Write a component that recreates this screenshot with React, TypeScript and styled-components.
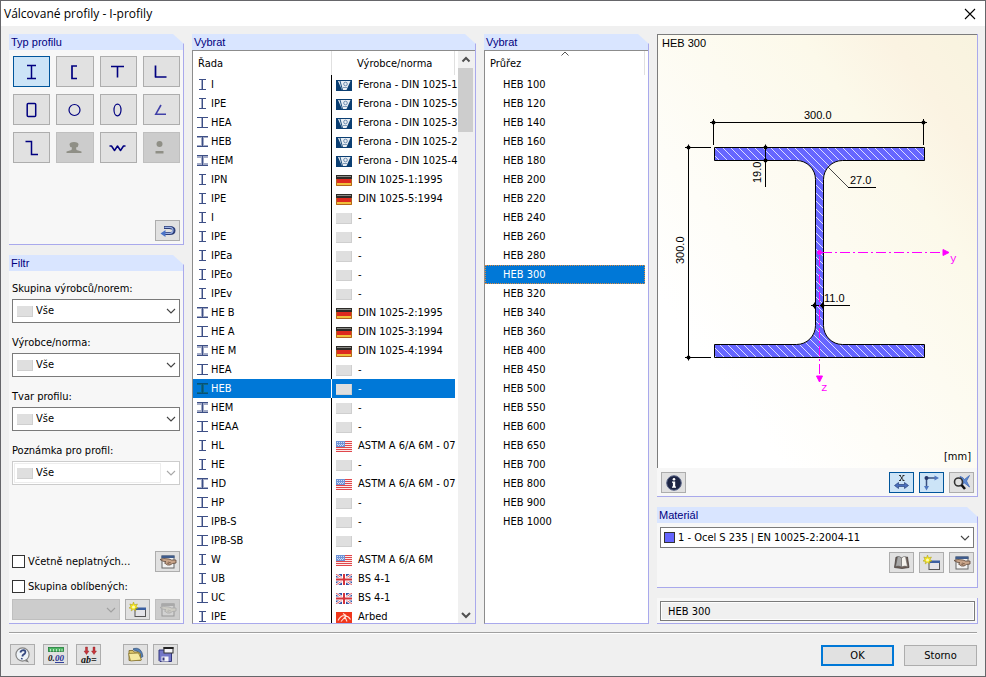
import React, { useState } from 'react';
import styled, { createGlobalStyle, css } from 'styled-components';

const UI_FONT = '"DejaVu Sans Condensed", Tahoma, sans-serif';
const ARIAL = '"Liberation Sans", Arial, sans-serif';
const NAVY = '#000080';
const LILAC = '#a9a9ec';

const GlobalStyle = createGlobalStyle`
  *, *::before, *::after { box-sizing: border-box; }
  body { margin: 0; background: #f0f0f0; }
  button, input, select { font: inherit; color: inherit; }
  svg { display: block; flex: none; }
`;

/* ---------- window ---------- */

const Dialog = styled.div`
  display: flex;
  flex-direction: column;
  height: 100vh;
  min-height: 640px;
  border: 1px solid #66666a;
  background: #f0f0f0;
  color: #000;
  font: 11px/14px ${UI_FONT};
`;

const TitleBar = styled.header`
  display: flex;
  align-items: center;
  justify-content: space-between;
  height: 25px;
  padding: 0 9px 0 3px;
  background: #fff;
`;

const Title = styled.h1`
  margin: 0;
  font: 12px/24px "Open Sans", "Segoe UI", sans-serif;
`;

const CloseButton = styled.button`
  display: grid;
  place-items: center;
  padding: 0;
  border: 0;
  background: none;
`;

const Columns = styled.main`
  display: grid;
  flex: 1;
  grid-template-columns: 175fr 284fr 165fr 321fr;
  column-gap: 8px;
  min-height: 0;
  padding: 8px 7px 0 8px;
`;

const Column = styled.div`
  display: flex;
  flex-direction: column;
  gap: 10px;
  min-width: 0;
  min-height: 0;
`;

/* ---------- panels ---------- */

const Panel = styled.section<{ $grow?: boolean }>`
  display: flex;
  flex-direction: column;
  flex: ${p => (p.$grow ? '1' : 'none')};
  min-width: 0;
  min-height: 0;
`;

const PanelTitle = styled.h2`
  flex: none;
  margin: 0;
  height: 16px;
  padding-left: 2px;
  border-right: 1px solid ${LILAC};
  background: #d9e5ff;
  color: ${NAVY};
  font: 11px/17px ${ARIAL};
  clip-path: polygon(0 0, calc(100% - 11px) 0, 100% 10px, 100% 100%, 0 100%);
`;

const PanelBody = styled.div<{ $pad?: string }>`
  display: flex;
  flex-direction: column;
  flex: 1;
  min-height: 0;
  padding: ${p => p.$pad ?? '0'};
  border: solid ${LILAC};
  border-width: 0 1px 1px 0;
  background: #f7f7f7;
`;

const ListFrame = styled(PanelBody)`
  flex-direction: row;
  border-left: 1px solid #8c8c8c;
  background: linear-gradient(#8c8c8c, #8c8c8c) top / 100% 1px no-repeat, #fff;
  padding-top: 1px;
`;

const TypeGrid = styled.div`
  display: grid;
  grid-template-columns: repeat(4, 1fr);
  gap: 7px 6px;
  margin-bottom: 57px;
`;

const toolLook = css<{ $active?: boolean }>`
  display: grid;
  place-items: center;
  padding: 0;
  border: 1px solid ${p => (p.$active ? '#00559b' : '#adadad')};
  background: ${p => (p.$active ? '#cce4f7' : '#e1e1e1')};
  &:disabled {
    border-color: #bfbfbf;
    background: #cccccc;
  }
`;

const TypeButton = styled.button`
  ${toolLook}
  height: 31px;
`;

const ToolButton = styled.button`
  ${toolLook}
  flex: none;
  width: 25px;
  height: 21px;
`;

const ToolRow = styled.div<{ $align?: string }>`
  display: flex;
  align-items: center;
  justify-content: ${p => p.$align ?? 'flex-end'};
  gap: 5px;
`;

const PreviewTools = styled(ToolRow)`
  padding: 4px 3px 3px 4px;
`;

const MaterialTools = styled(ToolRow)`
  padding-top: 4px;
`;

const Push = styled.div`
  margin-right: auto;
`;

/* ---------- form parts ---------- */

const Field = styled.div`
  display: flex;
  flex-direction: column;
  gap: 3px;
  margin-bottom: 13px;
`;

const Combo = styled.div<{ $muted?: boolean; $tight?: boolean; $grey?: boolean }>`
  display: flex;
  align-items: center;
  flex: ${p => (p.$grey ? '1' : 'none')};
  min-width: 0;
  height: ${p => (p.$grey || p.$tight ? 21 : 24)}px;
  padding: 0 3px 0 ${p => (p.$tight ? 3 : 4)}px;
  border: 1px solid ${p => (p.$grey ? '#bfbfbf' : p.$muted ? '#cccccc' : '#7a7a7a')};
  background: ${p => (p.$grey ? '#cccccc' : '#fff')};
  color: ${p => (p.$grey ? '#a0a0a0' : p.$muted ? '#a8a8a8' : '#444')};
`;

const ComboSelect = styled.select`
  flex: 1;
  min-width: 0;
  height: 100%;
  padding: 0 0 0 3px;
  border: 0;
  outline: 0;
  appearance: none;
  background: none;
  color: #000;
  opacity: 1;
`;

const Blank = styled.span`
  flex: none;
  width: 16px;
  height: 11px;
  border: solid #cfcfcf;
  border-width: 0 1px 1px 0;
  background: #dfdfdf;
`;

const MutedInner = styled.div`
  display: flex;
  align-items: center;
  flex: 1;
  align-self: stretch;
  min-width: 0;
  margin: 1px 5px 1px -3px;
  padding-left: 2px;
  border: 1px solid #ededed;
`;

const MaterialSwatch = styled.span`
  flex: none;
  width: 11px;
  height: 11px;
  border: 1px solid #333;
  background: #6666ff;
`;

const FilterEnd = styled.div`
  margin-top: auto;
`;

const CheckRow = styled.div`
  display: flex;
  align-items: center;
  justify-content: space-between;
  height: 25px;
`;

const CheckLabel = styled.label`
  display: flex;
  align-items: center;
  gap: 3px;
  white-space: nowrap;
`;

const CheckBox = styled.input`
  appearance: none;
  width: 13px;
  height: 13px;
  margin: 0;
  border: 1px solid #333;
  background: #fff;
  &:checked { background: #0078d7; }
`;

/* ---------- tables ---------- */

const ListClip = styled.div`
  flex: 1;
  min-width: 0;
  overflow: hidden;
  padding-right: 3px;
`;

const Table = styled.table`
  width: 100%;
  border-collapse: collapse;
  table-layout: fixed;
`;

const FirstCol = styled.col`
  width: 53%;
`;

const Th = styled.th<{ $indent: number }>`
  position: relative;
  height: 24px;
  padding: 1px 0 0 ${p => p.$indent}px;
  border-right: 1px solid #e0e0e0;
  font-weight: 400;
  text-align: left;
`;

const SortMark = styled.span`
  position: absolute;
  top: 0;
  left: calc(50% - 4px);
`;

const Tr = styled.tr<{ $selected?: boolean; $focus?: boolean }>`
  height: 19px;
  ${p => p.$selected && css`background: #0078d7; color: #fff;`}
  ${p => p.$focus && css`outline: 1px dotted #e08a3c; outline-offset: -1px;`}
`;

const Td = styled.td<{ $indent?: number; $rule?: boolean; $selected?: boolean }>`
  height: 19px;
  padding: 1px 0 0 ${p => p.$indent ?? 4}px;
  white-space: nowrap;
  ${p => p.$rule && css`border-right: 1px solid ${p.$selected ? '#fff' : '#000'};`}
`;

const CellContent = styled.div<{ $gap: number }>`
  display: flex;
  align-items: center;
  gap: ${p => p.$gap}px;
`;

const ScrollBar = styled.div`
  display: flex;
  flex: none;
  flex-direction: column;
  width: 17px;
  padding-right: 2px;
  background: #f0f0f0;
  color: #505050;
  z-index: 1;
`;

const ScrollArrow = styled.button`
  display: grid;
  place-items: center;
  height: 17px;
  padding: 0;
  border: 0;
  background: none;
`;

const ScrollTrack = styled.div`
  flex: 1;
`;

const ScrollThumb = styled.div`
  height: 64px;
  background: #cdcdcd;
`;

/* ---------- preview ---------- */

const Canvas = styled.figure`
  display: flex;
  flex: 1;
  flex-direction: column;
  min-height: 0;
  margin: 0;
  border: solid #7c7c7c;
  border-width: 1px 0 0 1px;
  background: linear-gradient(to top right, #ffffff 20%, #fcf9ea 72%, #fbf3e2 86%, #f8f3df);
  svg { flex: 1; width: 100%; min-height: 0; }
`;

const CanvasTitle = styled.figcaption`
  padding-left: 4px;
  font: 11px/17px ${ARIAL};
`;

const Unit = styled.div`
  padding: 0 6px 2px 0;
  font: 11px/19px ${UI_FONT};
  text-align: right;
`;

const ResultField = styled.input`
  width: 100%;
  height: 20px;
  padding: 0 7px;
  border: 1px solid #7a7a7a;
  outline: 1px solid #fdfdfd;
  outline-offset: -2px;
  background: #f0f0f0;
`;

/* ---------- footer ---------- */

const Footer = styled.footer`
  display: flex;
  align-items: center;
  flex: none;
  height: 44px;
  margin: 8px 8px 0 8px;
  border-top: 1px solid #a0a0a0;
  box-shadow: inset 0 1px #fff;
`;

const FooterGroup = styled.div<{ $gap: number }>`
  display: flex;
  gap: ${p => p.$gap}px;
  margin: 0 21px 0 1px;
`;

const Actions = styled.div`
  display: flex;
  gap: 10px;
  margin: 2px 0 0 auto;
`;

const ActionButton = styled.button<{ $primary?: boolean }>`
  width: 73px;
  height: 21px;
  padding: 0;
  border: ${p => (p.$primary ? '2px solid #0078d7' : '1px solid #adadad')};
  background: #e1e1e1;
`;

/* ---------- icons ---------- */

const Chevron = ({ up = false, bold = false }: { up?: boolean; bold?: boolean }) => (
  <svg width="10" height="10" viewBox="0 0 10 10" fill="none" stroke="currentColor" strokeWidth={bold ? 2 : 1.1}>
    <path d={up ? 'M1.5 6.5 5 3l3.5 3.5' : 'M1 3l4 4 4-4'} />
  </svg>
);

const typeShapes: Record<string, { node: React.ReactNode; label: string; off?: boolean }> = {
  i: { label: 'I-profily', node: <path d="M5 3.500h9M5 16.500h9M9.500 3v14" strokeWidth="1.500" /> },
  u: { label: 'U-profily', node: <path d="M12 4H7v12.500H12" strokeWidth="1.700" /> },
  t: { label: 'T-profily', node: <path d="M3 4.500h13M9.500 4v11.500" strokeWidth="1.600" /> },
  l: { label: 'L-profily', node: <path d="M4.500 3.500v12M4 15h11.500" strokeWidth="1.700" /> },
  box: { label: 'Obdélníkové duté profily', node: <rect x="5.200" y="3.500" width="8.500" height="13" rx="1" strokeWidth="1.500" /> },
  tube: { label: 'Trubky', node: <circle cx="9.500" cy="10" r="5.500" strokeWidth="1.200" /> },
  oval: { label: 'Oválné duté profily', node: <ellipse cx="9.500" cy="10" rx="3.500" ry="5.800" strokeWidth="1.200" /> },
  angle: { label: 'Úhlové profily', node: <path d="M10 5 4.800 14.200H15" strokeWidth="1.600" stroke="#4040a8" /> },
  z: { label: 'Z-profily', node: <path d="M3.500 3.500H9.500v13h6.500" strokeWidth="1.500" /> },
  rail: {
    label: 'Kolejnice', off: true,
    node: <path d="M4.500 6.500Q4.500 4 9 4t4.500 2.500Q13.500 9 11 9.500L11.500 12l5 1.500V15H1.500v-1.500l5-1.500L7 9.500Q4.500 9 4.500 6.500Z" fill="#8f8f86" stroke="none" />,
  },
  wave: { label: 'Vlnité profily', node: <path d="M1.500 8H3.500L6.500 12.500 9.500 8l3 4.500L15.500 8H17.500" strokeWidth="1.500" strokeLinejoin="round" /> },
  other: {
    label: 'Ostatní profily', off: true,
    node: <g fill="#8f8f86" stroke="none"><circle cx="8.500" cy="6" r="3" /><rect x="4.500" y="13" width="8" height="2.500" /></g>,
  },
};

const TypeIcon = ({ id }: { id: string }) => (
  <svg width="20" height="20" viewBox="0 0 20 20" fill="none" stroke={NAVY}>{typeShapes[id].node}</svg>
);

const ReturnIcon = () => (
  <svg width="16" height="14" viewBox="0 0 16 14" fill="none">
    <path d="M4 3.500h5.500q4.500 0 4.500 3t-4.500 3H5" stroke="#2c3d78" strokeWidth="3" />
    <path d="M4.500 3.300h5q3.500 0 3.500 3T9.500 9.300H5" stroke="#9db4e6" strokeWidth="1.200" />
    <path d="M.5 9.500 5.500 6v7Z" fill="#4a73c8" />
  </svg>
);

const EditIcon = ({ off = false }: { off?: boolean }) => (
  <svg width="18" height="16" viewBox="0 0 18 16" opacity={off ? 0.5 : 1}>
    <rect x="3" y="2" width="12" height="12" fill={off ? '#d8d8d8' : '#f2f2f2'} stroke="#666" />
    <rect x="2.500" y="1.500" width="13" height="2.500" fill={off ? '#888' : '#3f5c8c'} />
    <path d="M1 5.500 5 4.500l5 .5 2.500 1H17V9l-3.500.5-2.500 1.500H8.500l-3-2 1.500-1.300-3-.5Z" fill={off ? '#cfccbe' : '#c9a58a'} stroke={off ? '#888' : '#5d473a'} strokeWidth=".8" />
    <path d="M9 8l3 1M8 9l2.500 1" stroke={off ? '#888' : '#5b4132'} strokeWidth=".6" />
  </svg>
);

const NewIcon = () => (
  <svg width="18" height="16" viewBox="0 0 18 16">
    <rect x="6" y="6.500" width="10.500" height="8" fill="#e4e4e8" stroke="#555" />
    <rect x="5.500" y="5.500" width="11.500" height="2.500" fill="#3b5fa0" />
    <path d="M4.500 0l1 2.800L8.500 2 7 4.500 9 6 6.500 6.500 6.800 9 4.500 7.200 2.200 9 2.500 6.500 0 6l2-1.500L.8 2l2.700.8Z" fill="#f4e61e" stroke="#a89a1c" strokeWidth=".5" />
    <circle cx="4.500" cy="5" r="1.500" fill="#fffbb0" />
  </svg>
);

const HelpIcon = () => (
  <svg width="18" height="16" viewBox="0 0 18 16">
    <path d="M13 12.500l2 3-4.500-1.500Z" fill="#777" />
    <circle cx="8.500" cy="7.500" r="6.600" fill="#eef3f8" stroke="#858585" strokeWidth="1.200" />
    <path d="M6.300 5.500Q7 3.200 9.500 3.200q2.200.2 1.800 2.300-.3 1.300-1.800 2.100-1 .6-1.200 1.900M7.900 11l-.2 1.300" fill="none" stroke="#34477f" strokeWidth="1.800" />
  </svg>
);

const iconText = { fontFamily: '"Liberation Serif", serif', fontStyle: 'italic', fontWeight: 700 } as const;

const UnitsIcon = () => (
  <svg width="20" height="18" viewBox="0 0 20 18">
    <rect x="2.500" y="1.500" width="15" height="4" fill="#4fb565" stroke="#1d7d36" strokeWidth=".8" />
    <path d="M4.500 3v2.500M7.500 3v2.500M10.500 3v2.500M13.500 3v2.500M16 3v2.500" stroke="#d5f0d8" strokeWidth=".8" />
    <text x="2" y="15" fontSize="9" fill="#111" {...iconText}>0.</text>
    <text x="9" y="15" fontSize="9" fill="#1d2f94" textDecoration="underline" {...iconText}>00</text>
  </svg>
);

const RenameIcon = () => (
  <svg width="20" height="18" viewBox="0 0 20 18">
    <path d="M6.500 1H8.500v4H10L7.500 8.500 5 5H6.500ZM14 1h2v4h1.500L15 8.500 12.500 5H14Z" fill="#c8343a" stroke="#8b1e24" strokeWidth=".4" />
    <text x="2" y="16.500" fontSize="10" fill="#111" {...iconText}>ab=</text>
  </svg>
);

const OpenIcon = () => (
  <svg width="18" height="16" viewBox="0 0 18 16">
    <path d="M6.500 1.500q8-2 9.500 8l-2.500 1.500Q13 4 6.500 3Z" fill="#5580b5" stroke="#27456f" strokeWidth=".6" />
    <path d="M2 13.500V3.500h4l1 1.500h4.500l2 2v6.500Z" fill="#dcc56a" stroke="#77652a" strokeWidth=".8" />
    <path d="M1.500 6.500 11.500 6l3 7-11 1Z" fill="#f5e9a0" stroke="#8a7734" strokeWidth=".8" />
  </svg>
);

const SaveIcon = () => (
  <svg width="18" height="17" viewBox="0 0 18 17">
    <path d="M2 4h12.500v11.500H3l-1-1Z" fill="#7377c8" stroke="#33377d" />
    <rect x="4.500" y="10.500" width="7" height="5" fill="#f4f4f8" />
    <rect x="5.500" y="11.500" width="2" height="3" fill="#33377d" />
    <rect x="7" y="1.500" width="9" height="5.500" fill="#f4f4f8" stroke="#333" />
    <path d="M6.500 2h10" stroke="#222" strokeWidth="2" />
  </svg>
);

const InfoIcon = () => (
  <svg width="16" height="16" viewBox="0 0 16 16">
    <circle cx="8" cy="8" r="7.300" fill="#1c2443" stroke="#5b6688" />
    <path d="M6 6.500h3.200v5H10v1.200H6v-1.200h.9V7.700H6Z" fill="#fff" />
    <circle cx="8" cy="4.200" r="1.300" fill="#fff" />
  </svg>
);

const DimensionIcon = () => (
  <svg width="18" height="16" viewBox="0 0 18 16">
    <path d="M7 .5l3.500 5M10.500.500 7 5.500M6 .5h2M9.500.500h2M6 5.500h2M9.500 5.500h2" stroke="#222" strokeWidth=".9" />
    <path d="M1.500 10.500 5.500 7.500v2h6v-2L15.500 10.500 11.500 13.500v-2h-6v2Z" fill="#4a70bd" stroke="#28427d" strokeWidth=".7" />
  </svg>
);

const AxesIcon = () => (
  <svg width="18" height="18" viewBox="0 0 18 18">
    <path d="M3.500 4h10M3.500 4V13" stroke="#3a5080" strokeWidth="1.500" />
    <path d="M11.500 1.500 16 4l-4.500 2.500ZM1 12h5l-2.500 4.500Z" fill="#4f77bf" />
    <circle cx="3.500" cy="4" r="2" fill="#27376a" />
  </svg>
);

const ViewIcon = () => (
  <svg width="18" height="18" viewBox="0 0 18 18" fill="none">
    <path d="M7 2.500Q10 3 11.500 5.500L16.500 1.500 13.500 7l3 6-5-4-4 3L10 8Z" fill="#5f8bd0" stroke="#3f68b8" strokeWidth=".8" />
    <circle cx="5.500" cy="8" r="4" stroke="#333" strokeWidth="1.600" />
    <path d="M8.500 11 12 15" stroke="#111" strokeWidth="2.600" />
  </svg>
);

const BookIcon = () => (
  <svg width="18" height="15" viewBox="0 0 18 15">
    <path d="M1.500 12.500 3 2l5.500 1 6-1 1.500 10.500L9 13.500Z" fill="#75635a" stroke="#3a3432" strokeWidth=".7" />
    <path d="M2.500 11.500 4.500 1.500Q7 1 8.500 3v9Q5.500 10.500 2.500 11.500Z" fill="#a9a9a9" stroke="#555" strokeWidth=".6" />
    <path d="M8.500 3q2-2 4-1.500L14.500 11.500Q11.500 10.500 8.500 12Z" fill="#f5f3ee" stroke="#666" strokeWidth=".6" />
  </svg>
);

/* `heavy` runs from 0 (thin flanges) to 2 (thick flanges). */
const ProfileIcon = ({ wide, heavy, selected }: { wide: boolean; heavy: number; selected: boolean }) => {
  const dark = selected ? '#075078' : '#3d4f86';
  const soft = selected ? '#0b6a86' : '#a3abc6';
  const x = wide ? 0 : 2;
  const w = wide ? 11 : 7;
  return (
    <svg width="11" height="12" viewBox="0 0 11 12" shapeRendering="crispEdges">
      {heavy > 0 && <path d={`M${x} 1.500h${w}M${x} 9.500h${w}`} stroke={soft} />}
      {heavy > 1 && <path d={`M${x} 2.500h${w}M${x} 8.500h${w}`} stroke={soft} />}
      <path d="M4.500 1v9" stroke={soft} />
      {heavy > 0 && <path d="M6.500 1v9" stroke={soft} />}
      <path d={`M${x} .500h${w}M${x} 10.500h${w}M5.500 0v11`} stroke={dark} />
    </svg>
  );
};

const Flag = ({ kind }: { kind: string }) => {
  if (kind === 'none') return <Blank />;
  return (
    <svg width="16" height="11" viewBox="0 0 16 11">
      {kind === 'ferona' && (
        <>
          <rect width="16" height="11" fill="#0b3f73" />
          <path d="M2 1h12.500L10.500 10H6Z" fill="#e8eef4" />
          <path d="M4 1l2.500 9" stroke="#0b3f73" strokeWidth=".9" />
          <circle cx="9.500" cy="4" r="1.800" fill="none" stroke="#6385a8" strokeWidth=".9" />
          <path d="M7 7.500h4" stroke="#6385a8" strokeWidth=".8" />
        </>
      )}
      {kind === 'de' && (
        <>
          <rect width="16" height="11" fill="#dd2a1f" />
          <rect width="16" height="4" fill="#2d2b28" />
          <rect x="1" y="1" width="14" height="1" fill="#8a8a86" />
          <rect y="8" width="16" height="3" fill="#f0c03c" />
          <path d="M.5 4v6.500h15V4" fill="none" stroke="#b4651c" />
        </>
      )}
      {kind === 'us' && (
        <>
          <rect width="16" height="11" fill="#fbeaea" />
          <path d="M0 .500h16M0 2.500h16M0 4.500h16M0 6.500h16M0 8.500h16M0 10.500h16" stroke="#e0474c" />
          <rect width="9" height="6" fill="#6f93d6" />
          <path d="M1 1.500h7M1 3.500h7M2 4.500h6" stroke="#cfdcf5" strokeDasharray="1 1" />
        </>
      )}
      {kind === 'gb' && (
        <>
          <rect width="16" height="11" fill="#3553a4" />
          <path d="M0 0l16 11M16 0 0 11" stroke="#fff" strokeWidth="2.400" />
          <path d="M0 0l16 11M16 0 0 11" stroke="#d5343c" strokeWidth=".8" />
          <path d="M8 0v11M0 5.500h16" stroke="#fff" strokeWidth="4" />
          <path d="M8 0v11M0 5.500h16" stroke="#d5343c" strokeWidth="2" />
        </>
      )}
      {kind === 'arbed' && (
        <>
          <rect width="16" height="11" fill="#f0371c" />
          <path d="M2 8.500q2.500-5 6.500-5Q12.500 4 14.500 7.500M5 9.500l4-4.500 2 4.500M7 1.500l3 2L8.500 7" fill="none" stroke="#ffe3d8" strokeWidth="1.100" />
        </>
      )}
    </svg>
  );
};

/* ---------- section drawing ---------- */

const Marker = ({ x, y }: { x: number; y: number }) => (
  <g>
    <circle cx={x} cy={y} r="2" />
    <path d={`M${x - 3} ${y}h6M${x} ${y - 3}v6`} stroke="#000" />
  </g>
);

const SectionDrawing = () => (
  <svg viewBox="658 52 319 395" role="img" aria-label="HEB 300">
    <defs>
      <pattern id="hatch" width="8" height="8" patternUnits="userSpaceOnUse" x="715" y="148">
        <rect width="8" height="8" fill="#6666ff" />
        <path d="M-1-1 9 9M-1 7l2 2M7-1l2 2" stroke="#dcdcff" strokeWidth="1" />
      </pattern>
    </defs>
    <path
      d="M714.500 147.500H924.500V160.500H842.500A19 19 0 0 0 823.500 179.500V325.500A19 19 0 0 0 842.500 344.500H924.500V357.500H714.500V344.500H796.500A19 19 0 0 0 815.500 325.500V179.500A19 19 0 0 0 796.500 160.500H714.500Z"
      fill="url(#hatch)" stroke="#000"
    />
    <g stroke="#000" fill="none">
      <path d="M710 122.500h217M713.500 119v26M923.500 119v26" />
      <path d="M688.500 145v215M685 147.500h26M685 357.500h26" />
      <path d="M765.500 145v42" />
      <path d="M811 305.500h39" />
      <path d="M828 167l20.500 20.500" stroke="#333" strokeWidth=".9" />
      <path d="M848 187.500h28" />
    </g>
    <g>
      <Marker x={713.5} y={122.5} /><Marker x={923.5} y={122.5} />
      <Marker x={688.5} y={147.5} /><Marker x={688.5} y={357.5} />
      <Marker x={765.5} y={147.5} /><Marker x={765.5} y={160.5} />
      <Marker x={814.5} y={305.5} /><Marker x={822.5} y={305.5} />
    </g>
    <g fill="#f0f" stroke="#f0f">
      <path d="M822 252.500h121" strokeDasharray="10 3 2 3" />
      <path d="M819.500 256v120" strokeDasharray="10 3 2 3" />
      <circle cx="819.500" cy="252.500" r="2" />
      <path d="M943 249.500v6l6-3ZM816.500 376h6l-3 6Z" />
    </g>
    <g fontFamily={ARIAL} fontSize="11">
      <text x="804" y="119">300.0</text>
      <text x="850" y="184">27.0</text>
      <text x="824" y="302">11.0</text>
      <text transform="translate(684 264) rotate(-90)">300.0</text>
      <text transform="translate(761 183) rotate(-90)">19.0</text>
    </g>
    <g fontFamily='"Liberation Mono", monospace' fontSize="11" fill="#f0f">
      <text x="950" y="262">y</text>
      <text x="821" y="391">z</text>
    </g>
  </svg>
);

/* ---------- data ---------- */

type Series = [name: string, wide: boolean, heavy: number, flag: string, norm: string];

const series: Series[] = [
  ['I', false, 0, 'ferona', 'Ferona - DIN 1025-1'],
  ['IPE', false, 0, 'ferona', 'Ferona - DIN 1025-5'],
  ['HEA', true, 0, 'ferona', 'Ferona - DIN 1025-3'],
  ['HEB', true, 1, 'ferona', 'Ferona - DIN 1025-2'],
  ['HEM', true, 2, 'ferona', 'Ferona - DIN 1025-4'],
  ['IPN', false, 0, 'de', 'DIN 1025-1:1995'],
  ['IPE', false, 0, 'de', 'DIN 1025-5:1994'],
  ['I', false, 0, 'none', '-'],
  ['IPE', false, 0, 'none', '-'],
  ['IPEa', false, 0, 'none', '-'],
  ['IPEo', false, 0, 'none', '-'],
  ['IPEv', false, 0, 'none', '-'],
  ['HE B', true, 1, 'de', 'DIN 1025-2:1995'],
  ['HE A', true, 0, 'de', 'DIN 1025-3:1994'],
  ['HE M', true, 2, 'de', 'DIN 1025-4:1994'],
  ['HEA', true, 0, 'none', '-'],
  ['HEB', true, 1, 'none', '-'],
  ['HEM', true, 2, 'none', '-'],
  ['HEAA', true, 0, 'none', '-'],
  ['HL', false, 0, 'us', 'ASTM A 6/A 6M - 07'],
  ['HE', false, 0, 'none', '-'],
  ['HD', true, 1, 'us', 'ASTM A 6/A 6M - 07'],
  ['HP', true, 0, 'none', '-'],
  ['IPB-S', true, 0, 'none', '-'],
  ['IPB-SB', true, 0, 'none', '-'],
  ['W', false, 0, 'us', 'ASTM A 6/A 6M'],
  ['UB', false, 0, 'gb', 'BS 4-1'],
  ['UC', true, 0, 'gb', 'BS 4-1'],
  ['IPE', false, 0, 'arbed', 'Arbed'],
];

const sizes = [
  100, 120, 140, 160, 180, 200, 220, 240, 260, 280, 300, 320,
  340, 360, 400, 450, 500, 550, 600, 650, 700, 800, 900, 1000,
];

const filters = [
  { id: 'group', label: 'Skupina výrobců/norem:' },
  { id: 'maker', label: 'Výrobce/norma:' },
  { id: 'shape', label: 'Tvar profilu:' },
  { id: 'note', label: 'Poznámka pro profil:', muted: true },
];

export default function App() {
  const [type, setType] = useState('i');
  const [row, setRow] = useState(16);
  const [size, setSize] = useState(300);

  return (
    <>
      <GlobalStyle />
      <Dialog>
        <TitleBar>
          <Title>Válcované profily - I-profily</Title>
          <CloseButton aria-label="Zavřít">
            <svg width="12" height="12" viewBox="0 0 12 12" stroke="#000" strokeWidth="1.100">
              <path d="M1 1l10 10M11 1 1 11" />
            </svg>
          </CloseButton>
        </TitleBar>

        <Columns>
          <Column>
            <Panel>
              <PanelTitle>Typ profilu</PanelTitle>
              <PanelBody $pad="6px 3px 3px 4px">
                <TypeGrid>
                  {Object.entries(typeShapes).map(([id, t]) => (
                    <TypeButton key={id} aria-label={t.label} disabled={t.off} $active={id === type} onClick={() => setType(id)}>
                      <TypeIcon id={id} />
                    </TypeButton>
                  ))}
                </TypeGrid>
                <ToolRow><ToolButton aria-label="Zpět"><ReturnIcon /></ToolButton></ToolRow>
              </PanelBody>
            </Panel>

            <Panel $grow>
              <PanelTitle>Filtr</PanelTitle>
              <PanelBody $pad="11px 3px 3px 3px">
                {filters.map(f => (
                  <Field key={f.id}>
                    <label htmlFor={f.id}>{f.label}</label>
                    <Combo $muted={f.muted}>
                      {f.muted ? (
                        <MutedInner>
                          <Blank />
                          <ComboSelect id={f.id} disabled><option>Vše</option></ComboSelect>
                        </MutedInner>
                      ) : (
                        <>
                          <Blank />
                          <ComboSelect id={f.id}><option>Vše</option></ComboSelect>
                        </>
                      )}
                      <Chevron />
                    </Combo>
                  </Field>
                ))}
                <FilterEnd>
                  <CheckRow>
                    <CheckLabel><CheckBox type="checkbox" />Včetně neplatných...</CheckLabel>
                    <ToolButton aria-label="Upravit filtr"><EditIcon /></ToolButton>
                  </CheckRow>
                  <CheckRow>
                    <CheckLabel><CheckBox type="checkbox" />Skupina oblíbených:</CheckLabel>
                  </CheckRow>
                  <ToolRow>
                    <Combo $grey>
                      <ComboSelect aria-label="Skupina oblíbených" disabled />
                      <Chevron />
                    </Combo>
                    <ToolButton aria-label="Nová skupina"><NewIcon /></ToolButton>
                    <ToolButton aria-label="Upravit skupinu" disabled><EditIcon off /></ToolButton>
                  </ToolRow>
                </FilterEnd>
              </PanelBody>
            </Panel>
          </Column>

          <Column>
            <Panel $grow>
              <PanelTitle>Vybrat</PanelTitle>
              <ListFrame>
                <ListClip>
                  <Table>
                    <colgroup><FirstCol /><col /></colgroup>
                    <thead>
                      <tr><Th $indent={5}>Řada</Th><Th $indent={25}>Výrobce/norma</Th></tr>
                    </thead>
                    <tbody>
                      {series.map(([name, wide, heavy, flag, norm], i) => (
                        <Tr key={i} $selected={i === row} onClick={() => setRow(i)}>
                          <Td $rule $selected={i === row}>
                            <CellContent $gap={3}>
                              <ProfileIcon wide={wide} heavy={heavy} selected={i === row} />{name}
                            </CellContent>
                          </Td>
                          <Td><CellContent $gap={6}><Flag kind={flag} />{norm}</CellContent></Td>
                        </Tr>
                      ))}
                    </tbody>
                  </Table>
                </ListClip>
                <ScrollBar>
                  <ScrollArrow aria-label="Nahoru"><Chevron up bold /></ScrollArrow>
                  <ScrollTrack><ScrollThumb /></ScrollTrack>
                  <ScrollArrow aria-label="Dolů"><Chevron bold /></ScrollArrow>
                </ScrollBar>
              </ListFrame>
            </Panel>
          </Column>

          <Column>
            <Panel $grow>
              <PanelTitle>Vybrat</PanelTitle>
              <ListFrame>
                <ListClip>
                  <Table>
                    <thead>
                      <tr>
                        <Th $indent={5}>
                          Průřez
                          <SortMark>
                            <svg width="8" height="5" viewBox="0 0 8 5" fill="none" stroke="#555"><path d="M.5 4.500 4 1l3.500 3.500" /></svg>
                          </SortMark>
                        </Th>
                      </tr>
                    </thead>
                    <tbody>
                      {sizes.map(s => (
                        <Tr key={s} $selected={s === size} $focus={s === size} onClick={() => setSize(s)}>
                          <Td $indent={18}>HEB {s}</Td>
                        </Tr>
                      ))}
                    </tbody>
                  </Table>
                </ListClip>
              </ListFrame>
            </Panel>
          </Column>

          <Column>
            <Panel $grow>
              <PanelBody>
                <Canvas>
                  <CanvasTitle>HEB {size}</CanvasTitle>
                  <SectionDrawing />
                  <Unit>[mm]</Unit>
                </Canvas>
                <PreviewTools>
                  <Push><ToolButton aria-label="Informace"><InfoIcon /></ToolButton></Push>
                  <ToolButton aria-label="Zobrazit kóty" $active><DimensionIcon /></ToolButton>
                  <ToolButton aria-label="Zobrazit osy" $active><AxesIcon /></ToolButton>
                  <ToolButton aria-label="Celý pohled"><ViewIcon /></ToolButton>
                </PreviewTools>
              </PanelBody>
            </Panel>

            <Panel>
              <PanelTitle>Materiál</PanelTitle>
              <PanelBody $pad="4px 3px 14px 3px">
                <Combo $tight>
                  <MaterialSwatch />
                  <ComboSelect aria-label="Materiál">
                    <option>1 - Ocel S 235 | EN 10025-2:2004-11</option>
                  </ComboSelect>
                  <Chevron />
                </Combo>
                <MaterialTools>
                  <ToolButton aria-label="Knihovna materiálů"><BookIcon /></ToolButton>
                  <ToolButton aria-label="Nový materiál"><NewIcon /></ToolButton>
                  <ToolButton aria-label="Upravit materiál"><EditIcon /></ToolButton>
                </MaterialTools>
              </PanelBody>
            </Panel>

            <Panel>
              <PanelBody $pad="3px 2px 2px 3px">
                <ResultField aria-label="Označení průřezu" readOnly value={`HEB ${size}`} />
              </PanelBody>
            </Panel>
          </Column>
        </Columns>

        <Footer>
          <FooterGroup $gap={8}>
            <ToolButton aria-label="Nápověda"><HelpIcon /></ToolButton>
            <ToolButton aria-label="Jednotky"><UnitsIcon /></ToolButton>
            <ToolButton aria-label="Přejmenovat"><RenameIcon /></ToolButton>
          </FooterGroup>
          <FooterGroup $gap={5}>
            <ToolButton aria-label="Otevřít"><OpenIcon /></ToolButton>
            <ToolButton aria-label="Uložit"><SaveIcon /></ToolButton>
          </FooterGroup>
          <Actions>
            <ActionButton $primary>OK</ActionButton>
            <ActionButton>Storno</ActionButton>
          </Actions>
        </Footer>
      </Dialog>
    </>
  );
}
